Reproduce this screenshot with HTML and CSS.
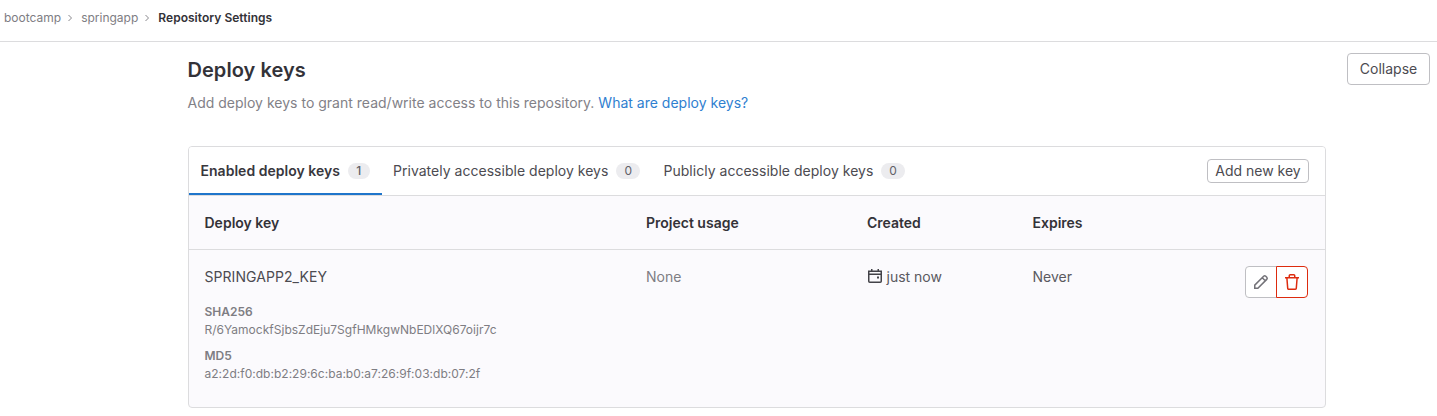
FILE: index.html
```html
<!DOCTYPE html>
<html lang="en">
<head>
<meta charset="utf-8">
<title>Repository Settings</title>
<link rel="stylesheet" href="styles.css">
</head>
<body>
<nav class="crumbs">
  <a>bootcamp</a>
  <svg class="chev" viewBox="0 0 8 8"><path d="M2.500 1l3 3-3 3"/></svg>
  <a>springapp</a>
  <svg class="chev" viewBox="0 0 8 8"><path d="M2.500 1l3 3-3 3"/></svg>
  <b>Repository Settings</b>
</nav>
<main class="section">
  <header class="head">
    <div>
      <h1>Deploy keys</h1>
      <p>Add deploy keys to grant read/write access to this repository. <a>What are deploy keys?</a></p>
    </div>
    <button class="collapse">Collapse</button>
  </header>
  <section class="card">
    <div class="tabs">
      <div class="tab active"><span>Enabled deploy keys</span><i class="badge">1</i></div>
      <div class="tab"><span>Privately accessible deploy keys</span><i class="badge">0</i></div>
      <div class="tab"><span>Publicly accessible deploy keys</span><i class="badge">0</i></div>
      <button class="add">Add new key</button>
    </div>
    <div class="row titles">
      <div>Deploy key</div><div>Project usage</div><div>Created</div><div>Expires</div>
    </div>
    <div class="row item">
      <div>
        <div class="name">SPRINGAPP2_KEY</div>
        <dl>
          <dt>SHA256</dt><dd>R/6YamockfSjbsZdEju7SgfHMkgwNbEDlXQ67oijr7c</dd>
          <dt>MD5</dt><dd>a2:2d:f0:db:b2:29:6c:ba:b0:a7:26:9f:03:db:07:2f</dd>
        </dl>
      </div>
      <div class="muted">None</div>
      <div class="created"><svg class="icon" viewBox="0 0 16 16"><path d="M1.750 3.250h12.500v10a1 1 0 0 1-1 1H2.750a1 1 0 0 1-1-1zM1.750 6.250h12.500M4.750 1v2.500M11.250 1v2.500"/><path class="solid" d="M10 8.500h2v2h-2z"/></svg>just now</div>
      <div>Never</div>
      <div class="actions">
        <button class="edit" aria-label="Edit"><svg class="icon" viewBox="0 0 16 16"><path d="M1.750 14.250v-3.100l8.900-8.900a1.500 1.500 0 0 1 2.100 0l1 1a1.500 1.500 0 0 1 0 2.100l-8.900 8.900zM9.200 3.700l3.100 3.100"/></svg></button>
        <button class="delete" aria-label="Delete"><svg class="icon" viewBox="0 0 16 16"><path d="M1 3.750h14M5.250 3.500V1.750a1 1 0 0 1 1-1h3.500a1 1 0 0 1 1 1V3.500M2.900 4l.8 10.250a1 1 0 0 0 1 1h6.600a1 1 0 0 0 1-1L13.100 4"/></svg></button>
      </div>
    </div>
  </section>
</main>
</body>
</html>
```
FILE: styles.css
```css
* { box-sizing: border-box; }
body { margin: 0; background: #fff; color: #333238; font: 14px/20px Inter, "Noto Sans", sans-serif; overflow: hidden; }
h1, p, dl, dd { margin: 0; }
button { font: inherit; color: #4c4b51; background: #fff; border: 1px solid #bfbfc3; border-radius: 4px; }
.icon { width: 16px; height: 16px; fill: none; stroke: currentColor; stroke-width: 1.5; flex: none; }
.solid { fill: currentColor; stroke: none; }
.crumbs { display: flex; align-items: center; height: 42px; padding: 0 4px 6px; border-bottom: 1px solid #dcdcde; font-size: 12px; color: #7e7d83; }
.crumbs b { color: #333238; font-weight: 600; letter-spacing: 0.03px; }
.chev { width: 8px; height: 8px; margin: 0 7px 0 5px; fill: none; stroke: #89888d; stroke-width: 1; }
.section { width: 1242.500px; margin-left: 187.500px; }
.head { display: flex; justify-content: space-between; align-items: flex-start; height: 104px; padding-top: 11px; }
h1 { margin-top: 5px; font-size: 20px; line-height: 24px; font-weight: 600; letter-spacing: 0.05px; }
.head p { margin-top: 11px; color: #828187; letter-spacing: 0.007px; }
.head a { color: #2f80d0; }
.collapse { height: 32px; width: 83px; padding: 0; }
.card { width: 1138px; height: 262px; margin-left: 0.500px; border: 1px solid #dcdcde; border-radius: 4px; background: #fbfafd; overflow: hidden; }
.tabs { display: flex; align-items: center; height: 49px; padding-right: 16px; background: #fff; border-bottom: 1px solid #dcdcde; }
.tab { display: flex; align-items: center; gap: 8px; height: 48px; padding: 0 12px 0 11.500px; color: #4c4b51; letter-spacing: 0.02px; }
.active { color: #38373d; font-weight: 600; box-shadow: inset 0 -2px #1f75cb; }
.badge { padding: 0 8px; border-radius: 10px; background: #ececef; color: #626168; font: 12px/16px Inter, sans-serif; letter-spacing: 0; }
.active .badge { padding: 0 8.300px; font-weight: 500; }
.add { width: 102px; height: 24px; margin-left: auto; padding: 0; line-height: 16px; }
.row { display: grid; grid-template-columns: 441.500px 221px 165.500px 165px 1fr; padding: 0 17px 0 15.500px; }
.titles { height: 54px; align-items: center; font-weight: 600; border-bottom: 1px solid #dcdcde; }
.item { padding-top: 16px; line-height: 22px; color: #5a595f; }
.name { color: #4c4b51; letter-spacing: 0.06px; }
.muted { color: #7e7d83; }
.created { display: flex; align-items: flex-start; gap: 3.500px; }
.created .icon { margin-top: 2px; color: #434248; }
dl { margin-top: 15px; font-size: 12px; line-height: 18px; color: #7e7d83; letter-spacing: 0.015px; }
dt { font-weight: 600; }
dd + dt { margin-top: 8px; }
.actions { display: flex; justify-content: flex-end; }
.actions button { width: 32px; height: 32px; display: grid; place-items: center; padding: 0; }
.actions .edit { border-radius: 4px 0 0 4px; color: #737278; }
.actions .delete { margin-left: -1px; border-color: #dd2b0e; color: #dd2b0e; border-radius: 0 4px 4px 0; }
```
